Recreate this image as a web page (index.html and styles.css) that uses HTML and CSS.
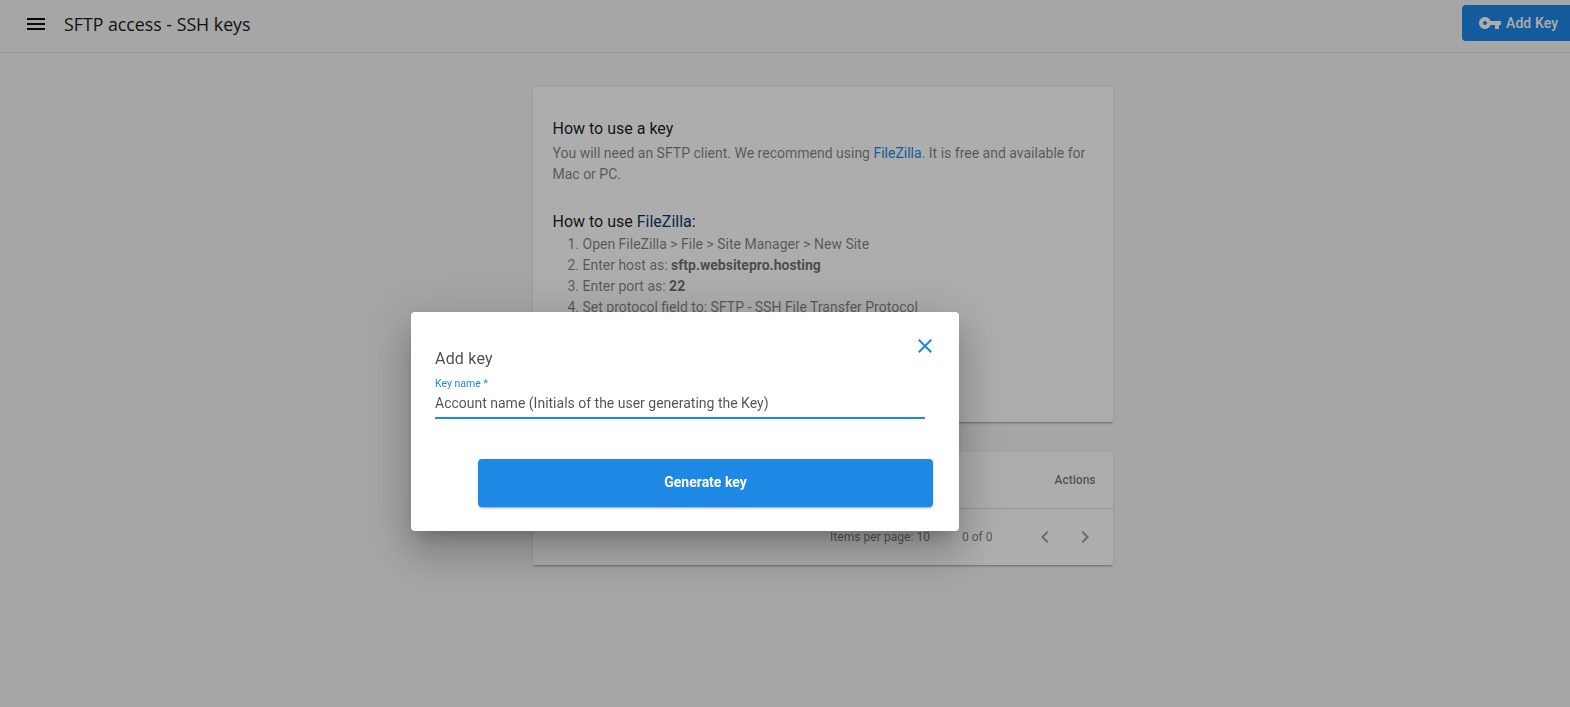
FILE: index.html
```html
<!DOCTYPE html>
<html lang="en">
<head>
<meta charset="utf-8">
<title>SFTP access - SSH keys</title>
<link rel="stylesheet" href="styles.css">
</head>
<body>
<header class="toolbar">
  <svg class="menu-icon" viewBox="0 0 24 24" width="24" height="24"><path d="M3 18h18v-2H3v2zm0-5h18v-2H3v2zm0-7v2h18V6H3z"/></svg>
  <h1 class="title">SFTP access - SSH keys</h1>
  <button class="add-btn">
    <svg viewBox="0 0 24 24" width="24" height="24"><path d="M12.65 10C11.83 7.67 9.61 6 7 6c-3.31 0-6 2.69-6 6s2.69 6 6 6c2.61 0 4.83-1.67 5.65-4H17v4h4v-4h2v-4H12.65zM7 14c-1.1 0-2-.9-2-2s.9-2 2-2 2 .9 2 2-.9 2-2 2z"/></svg>
    <span>Add Key</span>
  </button>
</header>
<main class="content">
  <section class="card info">
    <h2 class="heading">How to use a key</h2>
    <p class="para">You will need an SFTP client. We recommend using <a class="link" href="#">FileZilla</a>. It is free and available for Mac or PC.</p>
    <h2 class="heading second">How to use <a class="link-dark" href="#">FileZilla</a>:</h2>
    <ol class="steps">
      <li>Open FileZilla &gt; File &gt; Site Manager &gt; New Site</li>
      <li>Enter host as: <strong>sftp.websitepro.hosting</strong></li>
      <li>Enter port as: <strong>22</strong></li>
      <li>Set protocol field to: SFTP - SSH File Transfer Protocol</li>
    </ol>
  </section>
  <section class="card table">
    <div class="table-head"><span>Actions</span></div>
    <div class="paginator">
      <span class="per-page">Items per page: 10</span>
      <span class="range">0 of 0</span>
      <svg class="nav-icon" viewBox="0 0 24 24" width="24" height="24"><path d="M15.41 7.41L14 6l-6 6 6 6 1.41-1.41L10.83 12z"/></svg>
      <svg class="nav-icon" viewBox="0 0 24 24" width="24" height="24"><path d="M10 6L8.59 7.41 13.17 12l-4.58 4.59L10 18l6-6z"/></svg>
    </div>
  </section>
</main>
<div class="scrim"></div>
<div class="dialog">
  <svg class="close" viewBox="0 0 24 24" width="24" height="24"><path d="M19 6.41L17.59 5 12 10.59 6.41 5 5 6.41 10.59 12 5 17.59 6.41 19 12 13.41 17.59 19 19 17.59 13.41 12z"/></svg>
  <h2 class="dialog-title">Add key</h2>
  <label class="field">
    <span class="field-label">Key name *</span>
    <span class="field-value">Account name (Initials of the user generating the Key)</span>
  </label>
  <button class="generate">Generate key</button>
</div>
</body>
</html>
```
FILE: styles.css
```css
* { box-sizing: border-box; }
html, body { margin: 0; height: 707px; overflow: hidden; }
body { background: #f5f5f5; font-family: Roboto, sans-serif; color: rgba(0,0,0,.87); }

.toolbar { display: flex; align-items: center; height: 53px; padding-left: 24px; border-bottom: 1px solid rgba(0,0,0,.08); background: #f5f5f5; position: relative; }
.menu-icon { fill: rgba(0,0,0,.95); margin-top: -4px; }
.title { margin: -4px 0 0 16px; font: 400 17.75px/24px "Open Sans", sans-serif; color: #1a1a1a; }
.add-btn { margin-left: auto; margin-right: -32px; margin-top: -6px; display: flex; align-items: center; width: 140px; height: 36px; padding: 0 0 0 16px; border: 0; border-radius: 4px; background: #1e88e5; color: #fff; font: 500 14px/36px Roboto, sans-serif; }
.add-btn svg { fill: #fff; margin-right: 4px; flex: none; }
.add-btn span { letter-spacing: .1px; }

.content { display: flex; flex-direction: column; align-items: center; gap: 30px; padding-top: 34px; margin-left: 75px; }
.card { width: 580px; background: #fff; box-shadow: 0 2px 2px -1px rgba(0,0,0,.3), 0 1px 3px rgba(0,0,0,.1); }
.info { height: 335px; padding: 30px 20px 0; }
.heading { margin: 0; font: 400 16px/24px Roboto, sans-serif; color: rgba(0,0,0,.9); }
.heading.second { margin-top: 25px; }
.link-dark { color: #0d3a6b; text-decoration: none; }
.para { margin: 2px 0 0; font-size: 14px; line-height: 21px; color: rgba(0,0,0,.5); }
.link { color: #1e88e5; text-decoration: none; }
.steps { margin: 0; padding-left: 30px; font-size: 14px; line-height: 21px; color: rgba(0,0,0,.5); }
.steps strong { font-weight: 700; color: rgba(0,0,0,.58); }

.table { height: 113px; }
.table-head { display: flex; justify-content: flex-end; align-items: center; height: 57px; padding: 0 17px 0 0; border-bottom: 1px solid rgba(0,0,0,.14); font-size: 12px; font-weight: 500; color: rgba(0,0,0,.55); }
.paginator { display: flex; align-items: center; justify-content: flex-end; height: 56px; padding-right: 16px; font-size: 12px; color: rgba(0,0,0,.54); }
.per-page { margin-right: 32px; letter-spacing: .05px; }
.range { margin-right: 40px; }
.nav-icon { fill: rgba(0,0,0,.38); margin-left: 16px; }
.nav-icon:first-of-type { margin-left: 0; }

.scrim { position: fixed; inset: 0; background: rgba(0,0,0,.32); }
.dialog { position: absolute; left: 411px; top: 312px; width: 548px; height: 219px; padding: 37px 24px 0; background: #fff; border-radius: 4px; box-shadow: 0 11px 15px -7px rgba(0,0,0,.2), 0 24px 38px 3px rgba(0,0,0,.14), 0 9px 46px 8px rgba(0,0,0,.12); display: flex; flex-direction: column; }
.close { position: absolute; right: 22px; top: 22px; fill: #1e88e5; }
.dialog-title { margin: 0; font: 400 16px/20px Roboto, sans-serif; letter-spacing: .2px; color: rgba(0,0,0,.7); }
.field { display: flex; flex-direction: column; width: 490px; height: 41px; margin-top: 9px; border-bottom: 2px solid #1e88e5; }
.field-label { font-size: 10.5px; line-height: 12px; color: #1e88e5; }
.field-value { margin-top: 2px; font-size: 14px; line-height: 23px; color: rgba(0,0,0,.68); }
.generate { align-self: flex-end; width: 455px; height: 48px; margin-top: 40px; margin-right: 2px; padding: 0 0 3px; border: 0; border-radius: 4px; background: #1e88e5; color: #fff; font: 700 14px/20px Roboto, sans-serif; box-shadow: 0 2px 2px -1px rgba(0,0,0,.3), 0 1px 3px rgba(0,0,0,.12); }
```
